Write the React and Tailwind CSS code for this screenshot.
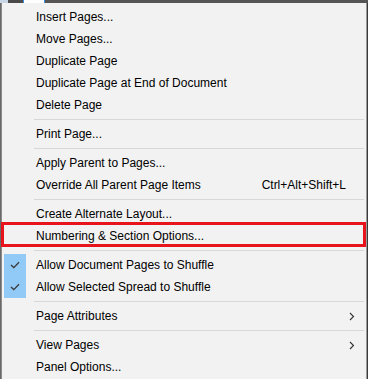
import React from 'react';

const Sep = () => (
  <div className="h-[7px] flex items-center pl-8 pr-[2px]">
    <div className="h-px w-full bg-[#d7d7d7]" />
  </div>
);

const Item = ({ label, shortcut, submenu }) => (
  <div className="h-[22px] flex items-center pl-[34px] pr-5 text-[12px] text-black">
    <span className="flex-1 whitespace-nowrap">{label}</span>
    {shortcut && <span className="whitespace-nowrap">{shortcut}</span>}
    {submenu && (
      <svg width="6" height="9" viewBox="0 0 6 9" className="mr-[-9px]">
        <path d="M1 1 L4.5 4.5 L1 8" fill="none" stroke="#333" strokeWidth="1.1" />
      </svg>
    )}
  </div>
);

const Check = () => (
  <svg width="10" height="8" viewBox="0 0 10 8">
    <path d="M1 4 L3.8 6.6 L9 1.2" fill="none" stroke="#3a3a3a" strokeWidth="1.3" />
  </svg>
);

export default function App() {
  return (
    <div className="w-[368px] h-[379px] bg-[#3a3a3a] overflow-hidden" style={{ fontFamily: '"Liberation Sans", Arial, sans-serif' }}>
      {/* background strip of the app behind */}
      <div className="h-[3px] flex">
        <div className="w-[8px] bg-[#c9d6e6]" />
        <div className="w-[15px] bg-[#4a4a4a]" />
        <div className="w-px bg-[#3b8ee8]" />
        <div className="w-[20px] bg-white" />
        <div className="w-px bg-[#3b8ee8]" />
        <div className="flex-1 bg-[#555]" />
      </div>
      <div className="flex h-[376px]">
        <div className="w-px bg-[#6a6a6a]" />
        <div className="w-px bg-[#8a8a8a]" />
        <div className="w-[364px] bg-[#f2f2f2] pt-[3px] relative">
          <Item label="Insert Pages..." />
          <Item label="Move Pages..." />
          <Item label="Duplicate Page" />
          <Item label="Duplicate Page at End of Document" />
          <Item label="Delete Page" />
          <Sep />
          <Item label="Print Page..." />
          <Sep />
          <Item label="Apply Parent to Pages..." />
          <Item label="Override All Parent Page Items" shortcut="Ctrl+Alt+Shift+L" />
          <Sep />
          <Item label="Create Alternate Layout..." />
          <div className="relative">
            <Item label="Numbering & Section Options..." />
            <div className="absolute left-[-1px] right-0 top-[-3px] bottom-0 border-[3px] border-[#e8141c]" />
          </div>
          <Sep />
          <div className="relative">
            <div className="absolute left-[2px] top-0 w-[22px] h-[44px] bg-[#91c9f7]" />
            <div className="absolute left-[2px] top-0 w-[22px] h-[22px] flex items-center justify-center"><Check /></div>
            <div className="absolute left-[2px] top-[22px] w-[22px] h-[22px] flex items-center justify-center"><Check /></div>
            <Item label="Allow Document Pages to Shuffle" />
            <Item label="Allow Selected Spread to Shuffle" />
          </div>
          <Sep />
          <Item label="Page Attributes" submenu />
          <Sep />
          <Item label="View Pages" submenu />
          <Item label="Panel Options..." />
        </div>
        <div className="w-px bg-[#9a9a9a]" />
        <div className="flex-1 bg-[#3a3a3a]" />
      </div>
    </div>
  );
}
